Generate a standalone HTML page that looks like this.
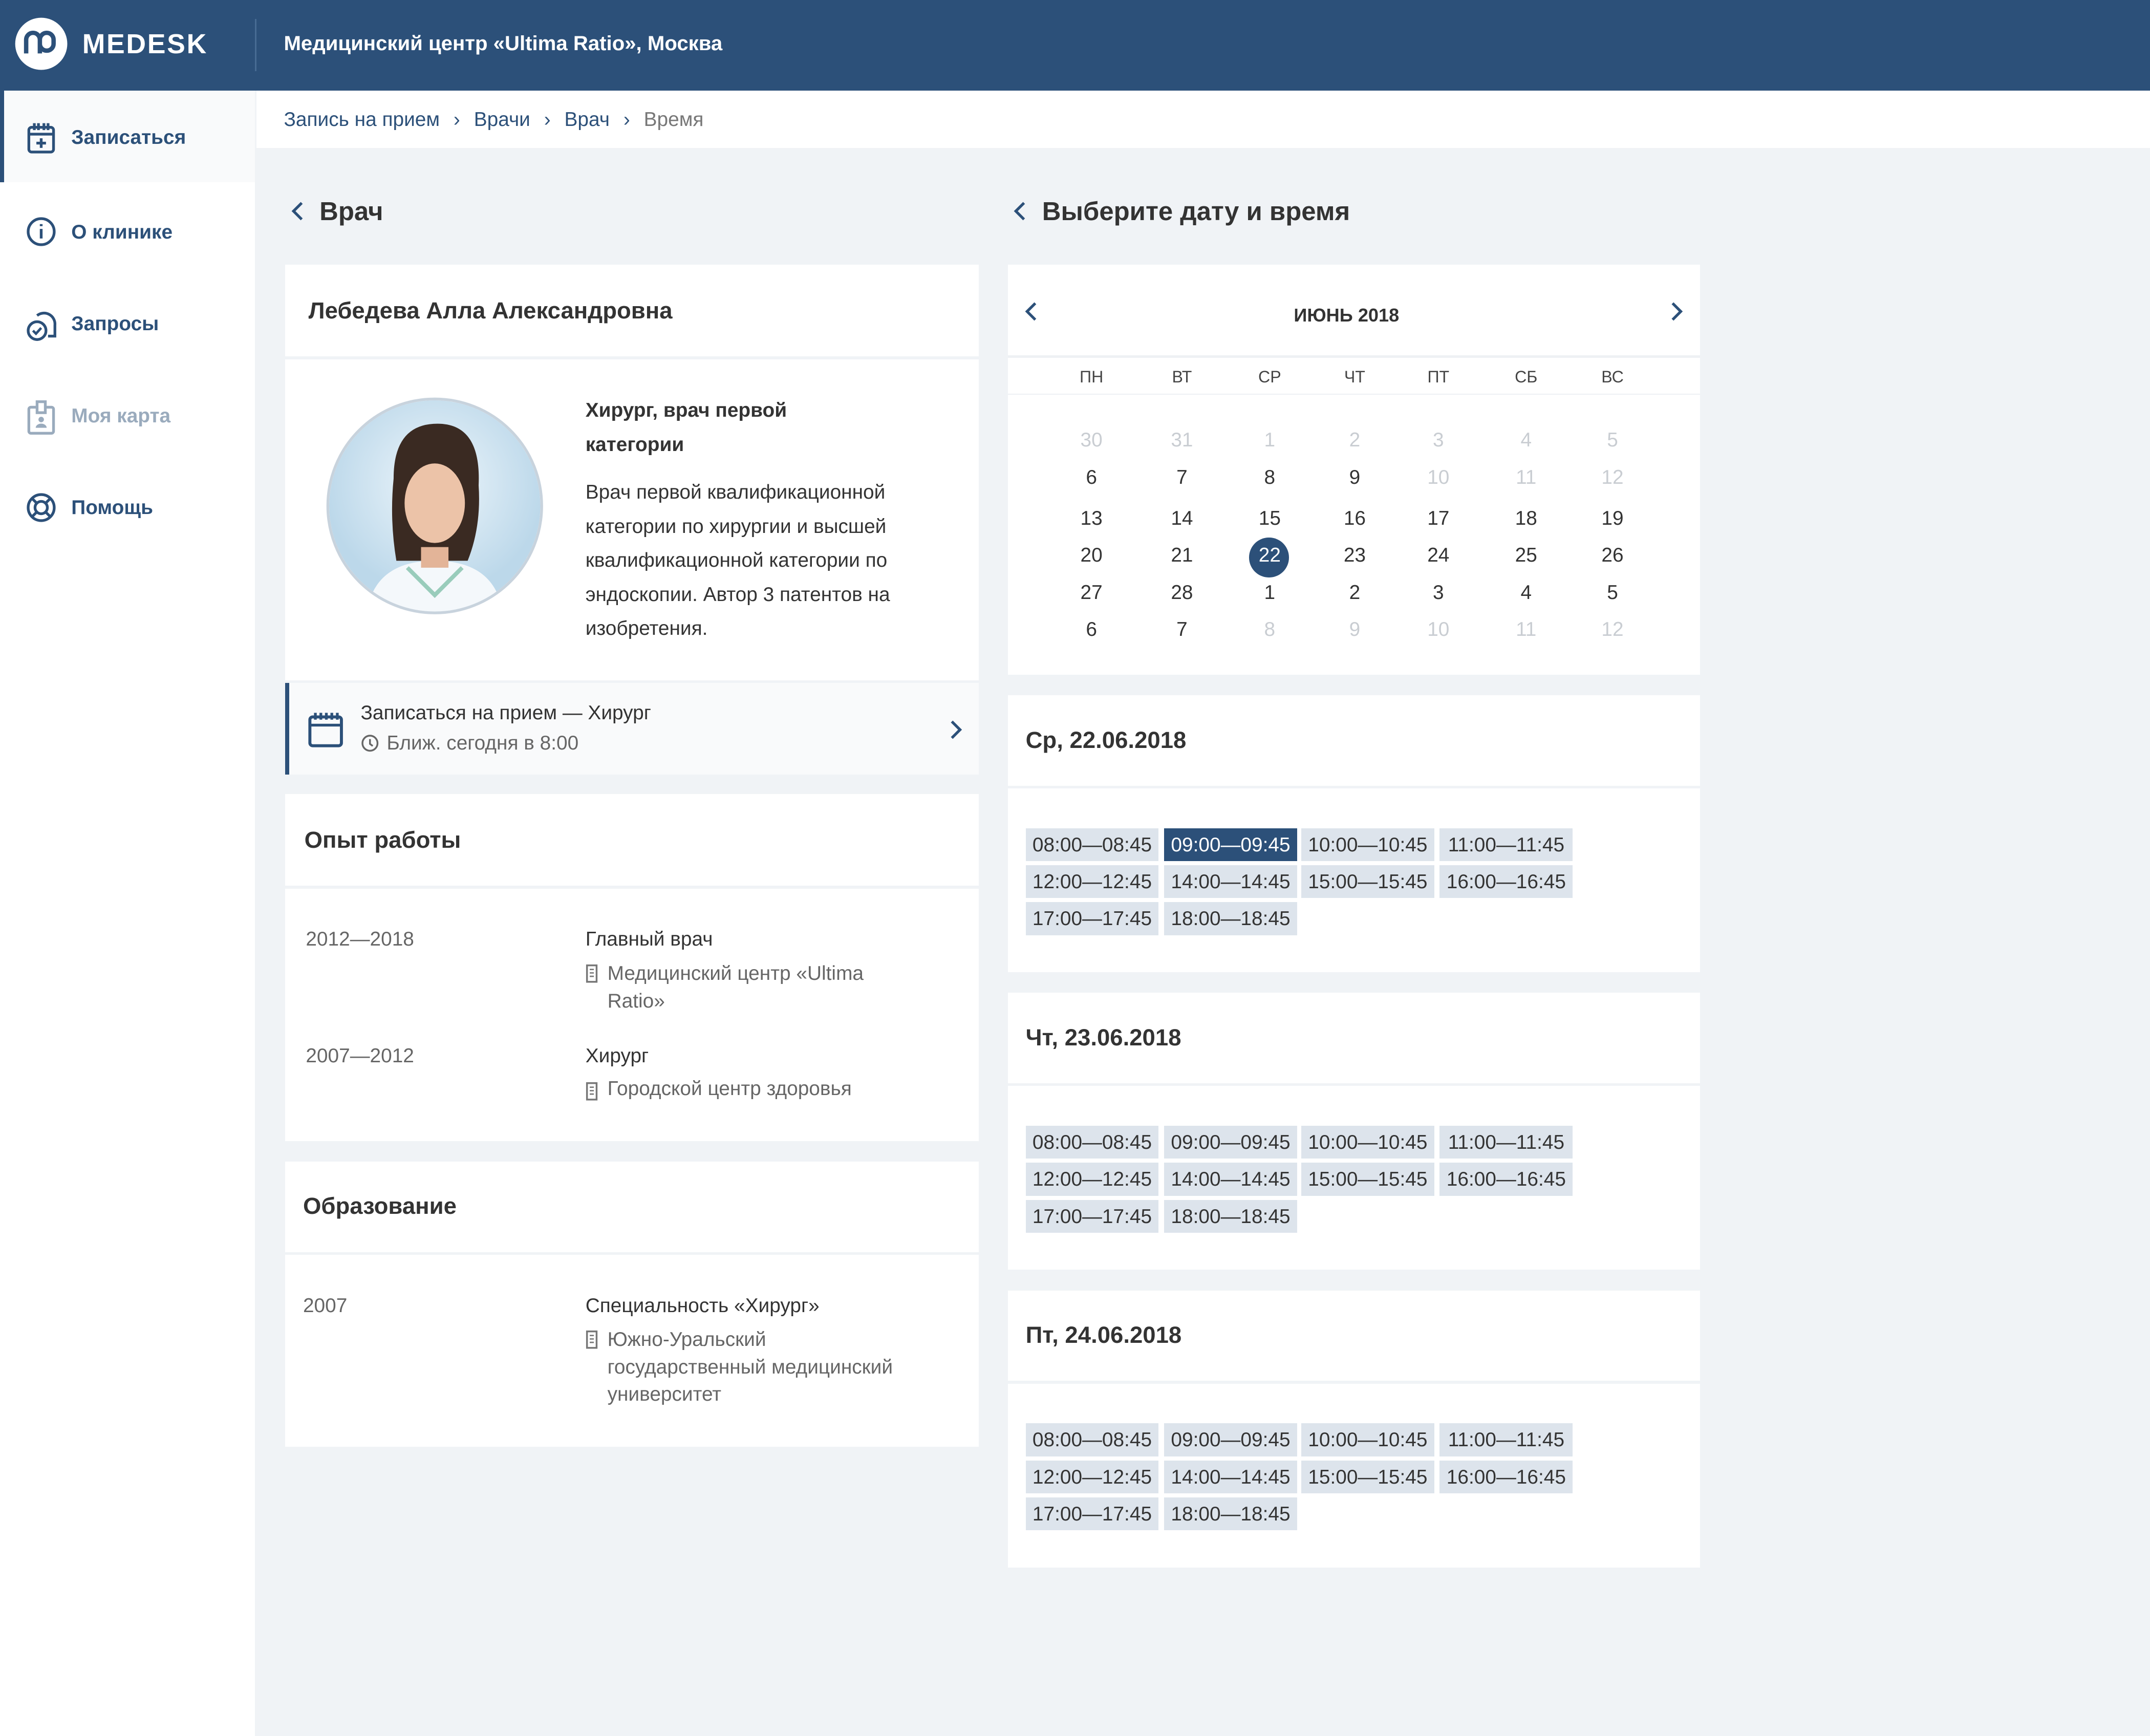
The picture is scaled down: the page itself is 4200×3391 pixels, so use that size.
<!DOCTYPE html>
<html><head><meta charset="utf-8">
<style>
html,body{margin:0;padding:0;}
body{width:1568px;height:1264.5px;zoom:2.67857;overflow:hidden;background:#f0f3f6;font-family:"Liberation Sans","Noto Sans CJK SC",sans-serif;color:#333;position:relative}
.a{position:absolute}
.hdr{left:0;top:0;width:1568px;height:66px;background:#2c5079}
.side{left:0;top:66px;width:186px;height:1200px;background:#fff}
.nav{left:0;width:186px;height:67px;}
.nav span{position:absolute;left:52px;font-weight:bold;font-size:14.5px;color:#2c5079;line-height:69px}
.nav svg{position:absolute;left:19px;top:23px}
.card{background:#fff}
.line{background:#eef1f4;height:2px}
.h2{font-weight:bold;font-size:17px;color:#333}
.slot{position:absolute;width:97px;height:24px;background:#dde4ec;font-size:14.5px;line-height:25px;text-align:center;color:#333}
.sel{background:#2c5079;color:#fff}
.d{position:absolute;width:40px;text-align:center;font-size:14.5px;color:#333}
.g{color:#c9cdd2}
.wd{position:absolute;width:40px;text-align:center;font-size:12px;color:#444}
.t{font-size:14.5px;color:#333}
.m{font-size:14.5px;color:#666}
.bi{position:absolute;left:0;top:3px}
</style></head><body>
<div class="a hdr"></div>
<svg class="a" style="left:10px;top:12px" width="40" height="40" viewBox="0 0 40 40"><circle cx="20" cy="20" r="19" fill="#fff"/><path d="M9 27V17a5 5 0 0 1 10 0v10M19 17a5 5 0 0 1 10 0v3a5 5 0 0 1-10 0" fill="none" stroke="#2c5079" stroke-width="3.2"/></svg>
<div class="a" style="left:60px;top:21px;font-size:20px;font-weight:bold;color:#fff;letter-spacing:1px">MEDESK</div>
<div class="a" style="left:186px;top:14px;width:1px;height:38px;background:#476b93"></div>
<div class="a" style="left:207px;top:23px;font-size:15px;font-weight:bold;color:#fff">Медицинский центр «Ultima Ratio», Москва</div>

<div class="a side"></div>
<div class="a nav" style="top:66px;background:#f9fafb;border-left:3px solid #2c5079;width:183px"><svg width="22" height="24" viewBox="0 0 22 24" style="left:16px"><rect x="2" y="4" width="18" height="18" rx="2" fill="none" stroke="#2c5079" stroke-width="2"/><path d="M2 9h18M6 1v5M9 1v5M13 1v5M16 1v5M11 12v7M7.5 15.5h7" stroke="#2c5079" stroke-width="2"/></svg><span style="left:49px">Записаться</span></div>
<div class="a nav" style="top:135px"><svg width="22" height="22"><circle cx="11" cy="11" r="9.5" fill="none" stroke="#2c5079" stroke-width="2"/><path d="M11 9v7M11 5.5v1.5" stroke="#2c5079" stroke-width="2"/></svg><span>О клинике</span></div>
<div class="a nav" style="top:202px"><svg width="22" height="24"><path d="M8 5a8 8 0 0 1 13 7v8h-5" fill="none" stroke="#2c5079" stroke-width="2"/><circle cx="8" cy="16" r="6.5" fill="none" stroke="#2c5079" stroke-width="2"/><path d="M5 16l2.2 2.2L11 14" fill="none" stroke="#2c5079" stroke-width="1.8"/></svg><span>Запросы</span></div>
<div class="a nav" style="top:269px"><svg width="22" height="26"><rect x="2" y="5" width="18" height="19" rx="1.5" fill="none" stroke="#9aabbd" stroke-width="2"/><rect x="8" y="1" width="6" height="8" fill="#fff" stroke="#9aabbd" stroke-width="2"/><circle cx="11" cy="14" r="2" fill="#9aabbd"/><path d="M7 20a4 3 0 0 1 8 0z" fill="#9aabbd"/></svg><span style="color:#9aabbd">Моя карта</span></div>
<div class="a nav" style="top:336px"><svg width="22" height="22"><circle cx="11" cy="11" r="9.5" fill="none" stroke="#2c5079" stroke-width="2"/><circle cx="11" cy="11" r="4.5" fill="none" stroke="#2c5079" stroke-width="2"/><path d="M4 4l4 4M18 4l-4 4M4 18l4-4M18 18l-4-4" stroke="#2c5079" stroke-width="2"/></svg><span>Помощь</span></div>

<div class="a" style="left:187px;top:66px;width:1381px;height:42px;background:#fff"></div>
<div class="a" style="left:207px;top:79px;font-size:14.5px;color:#2c5079">Запись на прием <span style="margin:0 6px">›</span> Врачи <span style="margin:0 6px">›</span> Врач <span style="margin:0 6px">›</span> <span style="color:#777">Время</span></div>

<svg class="a" style="left:212px;top:146px" width="10" height="16"><path d="M8 2L2 8l6 6" fill="none" stroke="#2c5079" stroke-width="2"/></svg>
<div class="a" style="left:233px;top:143px;font-size:19px;font-weight:bold;color:#333">Врач</div>
<svg class="a" style="left:739px;top:146px" width="10" height="16"><path d="M8 2L2 8l6 6" fill="none" stroke="#2c5079" stroke-width="2"/></svg>
<div class="a" style="left:760px;top:143px;font-size:19px;font-weight:bold;color:#333">Выберите дату и время</div>

<!-- left card -->
<div class="a card" style="left:208px;top:193px;width:506px;height:67px"></div>
<div class="a h2" style="left:225px;top:217px">Лебедева Алла Александровна</div>
<div class="a card" style="left:208px;top:262px;width:506px;height:234px"></div>
<svg class="a" style="left:237px;top:289px" width="160" height="160" viewBox="0 0 160 160"><defs><clipPath id="c"><circle cx="80" cy="80" r="77"/></clipPath><radialGradient id="bg" cx="0.5" cy="0.4"><stop offset="0" stop-color="#eef6fb"/><stop offset="1" stop-color="#bcd8ea"/></radialGradient></defs><g clip-path="url(#c)"><rect width="160" height="160" fill="url(#bg)"/><path d="M30 160q5-40 50-40t50 40z" fill="#f4f8fb"/><path d="M50 60q0-40 32-40t30 45q2 30-8 55h-52q-5-30-2-60z" fill="#3a2a22"/><ellipse cx="80" cy="78" rx="22" ry="29" fill="#ecc3a8"/><path d="M70 110h20v15h-20z" fill="#e3b498"/><path d="M60 125l20 20 20-20" fill="none" stroke="#9cb" stroke-width="3"/></g><circle cx="80" cy="80" r="78" fill="none" stroke="#c8d3dd" stroke-width="2"/></svg>
<div class="a" style="left:427px;top:287px;font-size:14.5px;font-weight:bold;line-height:25px;width:200px">Хирург, врач первой категории</div>
<div class="a" style="left:427px;top:347px;font-size:14.5px;line-height:24.8px;width:270px;color:#333">Врач первой квалификационной категории по хирургии и высшей квалификационной категории по эндоскопии. Автор 3 патентов на изобретения.</div>
<div class="a" style="left:208px;top:498px;width:503px;height:67px;background:#f9fafb;border-left:3px solid #2c5079"></div>
<svg class="a" style="left:224px;top:518px" width="28" height="28"><rect x="2" y="5" width="23" height="21" rx="2" fill="none" stroke="#2c5079" stroke-width="2.2"/><path d="M2 11h23M6 2v5M10 2v5M14 2v5M18 2v5M22 2v5" stroke="#2c5079" stroke-width="2"/></svg>
<div class="a t" style="left:263px;top:512px">Записаться на прием — Хирург</div>
<svg class="a" style="left:263px;top:535px" width="14" height="14"><circle cx="7" cy="7" r="5.5" fill="none" stroke="#666" stroke-width="1.3"/><path d="M7 4v3.5l2 1.5" fill="none" stroke="#666" stroke-width="1.3"/></svg>
<div class="a m" style="left:282px;top:534px">Ближ. сегодня в 8:00</div>
<svg class="a" style="left:692px;top:524px" width="10" height="16"><path d="M2 2l6 6-6 6" fill="none" stroke="#2c5079" stroke-width="2"/></svg>

<div class="a card" style="left:208px;top:579px;width:506px;height:67px"></div>
<div class="a h2" style="left:222px;top:603px">Опыт работы</div>
<div class="a card" style="left:208px;top:648px;width:506px;height:184px"></div>
<div class="a m" style="left:223px;top:677px">2012—2018</div>
<div class="a t" style="left:427px;top:677px">Главный врач</div>
<div class="a m" style="left:427px;top:700px;line-height:20px;width:240px;padding-left:16px;box-sizing:border-box"><svg class="bi" width="9" height="14"><rect x="1" y="1" width="7" height="12" fill="none" stroke="#777" stroke-width="1.3"/><path d="M3 4h3M3 6.5h3M3 9h3" stroke="#777"/></svg>Медицинский центр «Ultima Ratio»</div>
<div class="a m" style="left:223px;top:762px">2007—2012</div>
<div class="a t" style="left:427px;top:762px">Хирург</div>
<div class="a m" style="left:427px;top:786px;padding-left:16px"><svg class="bi" width="9" height="14"><rect x="1" y="1" width="7" height="12" fill="none" stroke="#777" stroke-width="1.3"/><path d="M3 4h3M3 6.5h3M3 9h3" stroke="#777"/></svg>Городской центр здоровья</div>

<div class="a card" style="left:208px;top:847px;width:506px;height:66px"></div>
<div class="a h2" style="left:221px;top:870px">Образование</div>
<div class="a card" style="left:208px;top:915px;width:506px;height:140px"></div>
<div class="a m" style="left:221px;top:944px">2007</div>
<div class="a t" style="left:427px;top:944px">Специальность «Хирург»</div>
<div class="a m" style="left:427px;top:967px;line-height:20px;width:240px;padding-left:16px;box-sizing:border-box"><svg class="bi" width="9" height="14"><rect x="1" y="1" width="7" height="12" fill="none" stroke="#777" stroke-width="1.3"/><path d="M3 4h3M3 6.5h3M3 9h3" stroke="#777"/></svg>Южно-Уральский государственный медицинский университет</div>

<!-- calendar -->
<div class="a card" style="left:735px;top:193px;width:505px;height:299px"></div>
<svg class="a" style="left:747px;top:219px" width="10" height="16"><path d="M8 2L2 8l6 6" fill="none" stroke="#2c5079" stroke-width="2"/></svg>
<svg class="a" style="left:1218px;top:219px" width="10" height="16"><path d="M2 2l6 6-6 6" fill="none" stroke="#2c5079" stroke-width="2"/></svg>
<div class="a" style="left:735px;top:222px;width:494px;text-align:center;font-size:13.5px;font-weight:bold;color:#333">ИЮНЬ 2018</div>
<div class="a line" style="left:735px;top:259px;width:505px"></div>
<div class="a line" style="left:735px;top:287px;width:505px;height:1px"></div>
<div class="a wd" style="left:776px;top:268px">ПН</div><div class="a wd" style="left:842px;top:268px">ВТ</div><div class="a wd" style="left:906px;top:268px">СР</div><div class="a wd" style="left:968px;top:268px">ЧТ</div><div class="a wd" style="left:1029px;top:268px">ПТ</div><div class="a wd" style="left:1093px;top:268px">СБ</div><div class="a wd" style="left:1156px;top:268px">ВС</div>

<div class="a" style="left:911px;top:392px;width:29px;height:29px;border-radius:50%;background:#2c5079"></div>
<div id="cal"></div>
<script>
var cols=[796,862,926,988,1049,1113,1176],rows=[322,349,379,406,433,460];
var data=[["30g","31g","1g","2g","3g","4g","5g"],["6","7","8","9","10g","11g","12g"],["13","14","15","16","17","18","19"],["20","21","22w","23","24","25","26"],["27","28","1","2","3","4","5"],["6","7","8g","9g","10g","11g","12g"]];
var h="";for(var r=0;r<6;r++)for(var c=0;c<7;c++){var v=data[r][c],cl="d";if(v.slice(-1)=="g"){cl+=" g";v=v.slice(0,-1)}var st="";if(v.slice(-1)=="w"){v=v.slice(0,-1);st="color:#fff;"}h+='<div class="'+cl+'" style="'+st+'left:'+(cols[c]-20)+'px;top:'+(rows[r]-9)+'px">'+v+'</div>'}
var tops=[507,724,941],names=["Ср, 22.06.2018","Чт, 23.06.2018","Пт, 24.06.2018"];
var sl=["08:00—08:45","09:00—09:45","10:00—10:45","11:00—11:45","12:00—12:45","14:00—14:45","15:00—15:45","16:00—16:45","17:00—17:45","18:00—18:45"],xs=[748,849,949,1050];
for(var k=0;k<3;k++){var t=tops[k];
h+='<div class="a card" style="left:735px;top:'+t+'px;width:505px;height:66px"></div><div class="a h2" style="left:748px;top:'+(t+23)+'px">'+names[k]+'</div><div class="a card" style="left:735px;top:'+(t+68)+'px;width:505px;height:134px"></div>';
for(var i=0;i<10;i++){var x=xs[i%4],y=t+97+Math.floor(i/4)*27;h+='<div class="slot'+(k==0&&i==1?' sel':'')+'" style="left:'+x+'px;top:'+y+'px">'+sl[i]+'</div>'}}
document.getElementById("cal").innerHTML=h;
</script>
</body></html>
